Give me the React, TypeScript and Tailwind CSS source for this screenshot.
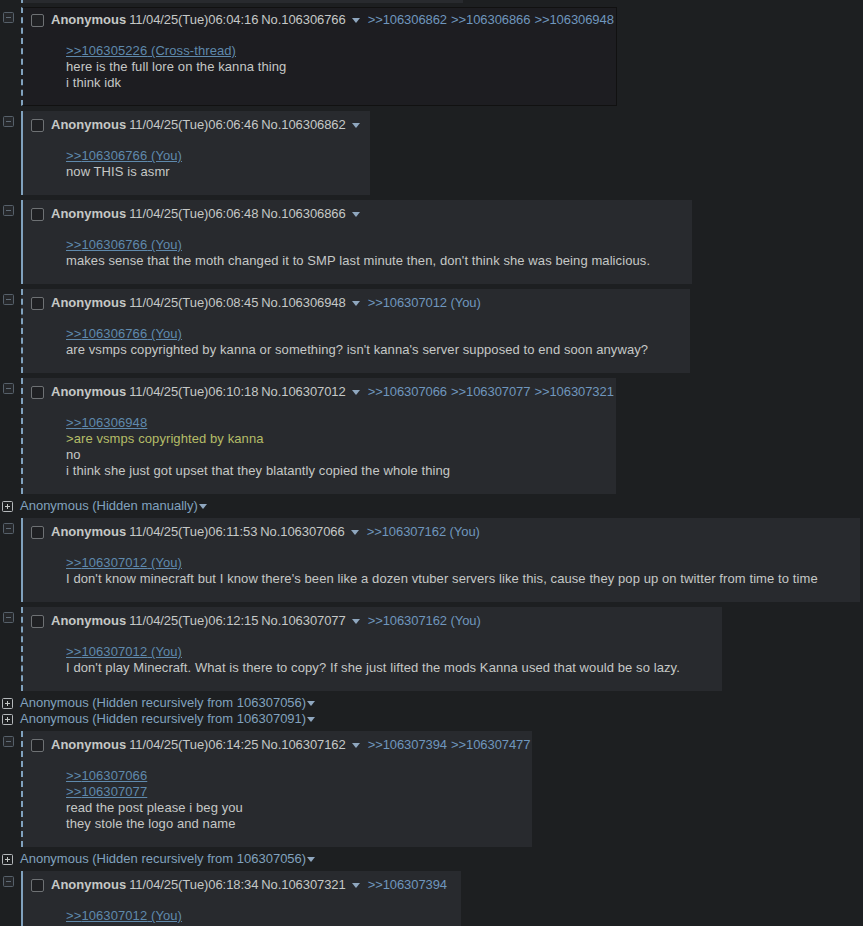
import React from 'react';

type Line =
  | { kind: 'quote'; no: string; note?: string }
  | { kind: 'green'; text: string }
  | { kind: 'text'; text: string };

type Post = {
  type: 'post';
  no: string;
  time: string;
  backlinks: string[];
  body: Line[];
  dashed?: boolean;
  highlight?: boolean;
  minW?: string;
};

type Hidden = { type: 'hidden'; labels: string[] };

const q = (no: string, note?: string): Line => ({ kind: 'quote', no, note });
const t = (text: string): Line => ({ kind: 'text', text });
const g = (text: string): Line => ({ kind: 'green', text });

const items: (Post | Hidden)[] = [
  {
    type: 'post',
    no: '106306766',
    time: '06:04:16',
    backlinks: ['106306862', '106306866', '106306948'],
    body: [q('106305226', '(Cross-thread)'), t('here is the full lore on the kanna thing'), t('i think idk')],
    dashed: true,
    highlight: true,
  },
  {
    type: 'post',
    no: '106306862',
    time: '06:06:46',
    backlinks: [],
    body: [q('106306766', '(You)'), t('now THIS is asmr')],
  },
  {
    type: 'post',
    no: '106306866',
    time: '06:06:48',
    backlinks: [],
    body: [
      q('106306766', '(You)'),
      t("makes sense that the moth changed it to SMP last minute then, don't think she was being malicious."),
    ],
  },
  {
    type: 'post',
    no: '106306948',
    time: '06:08:45',
    backlinks: ['106307012 (You)'],
    body: [
      q('106306766', '(You)'),
      t("are vsmps copyrighted by kanna or something? isn't kanna's server supposed to end soon anyway?"),
    ],
    dashed: true,
  },
  {
    type: 'post',
    no: '106307012',
    time: '06:10:18',
    backlinks: ['106307066', '106307077', '106307321'],
    body: [
      q('106306948'),
      g('>are vsmps copyrighted by kanna'),
      t('no'),
      t('i think she just got upset that they blatantly copied the whole thing'),
    ],
    dashed: true,
  },
  { type: 'hidden', labels: ['Anonymous (Hidden manually)'] },
  {
    type: 'post',
    no: '106307066',
    time: '06:11:53',
    backlinks: ['106307162 (You)'],
    body: [
      q('106307012', '(You)'),
      t(
        "I don't know minecraft but I know there's been like a dozen vtuber servers like this, cause they pop up on twitter from time to time"
      ),
    ],
  },
  {
    type: 'post',
    no: '106307077',
    time: '06:12:15',
    backlinks: ['106307162 (You)'],
    body: [
      q('106307012', '(You)'),
      t("I don't play Minecraft. What is there to copy? If she just lifted the mods Kanna used that would be so lazy."),
    ],
    dashed: true,
  },
  {
    type: 'hidden',
    labels: ['Anonymous (Hidden recursively from 106307056)', 'Anonymous (Hidden recursively from 106307091)'],
  },
  {
    type: 'post',
    no: '106307162',
    time: '06:14:25',
    backlinks: ['106307394', '106307477'],
    body: [q('106307066'), q('106307077'), t('read the post please i beg you'), t('they stole the logo and name')],
    dashed: true,
  },
  { type: 'hidden', labels: ['Anonymous (Hidden recursively from 106307056)'] },
  {
    type: 'post',
    no: '106307321',
    time: '06:18:34',
    backlinks: ['106307394'],
    body: [q('106307012', '(You)'), t('')],
    minW: 'min-w-[440px]',
  },
];

function Triangle({ className }: { className?: string }) {
  return (
    <svg width="8" height="5" viewBox="0 0 8 5" className={className}>
      <path d="M0 0 H8 L4 5 Z" fill="#8fa7bf" />
    </svg>
  );
}

function MinusBox() {
  return (
    <svg width="11" height="11" viewBox="0 0 11 11" className="block">
      <rect x="0.5" y="0.5" width="10" height="10" rx="1" fill="#25272a" stroke="#56606a" />
      <path d="M3 5.5 H8" stroke="#5f6a75" strokeWidth="1" />
    </svg>
  );
}

function PlusBox() {
  return (
    <svg width="11" height="11" viewBox="0 0 11 11" className="block">
      <rect x="0.5" y="0.5" width="10" height="10" rx="1" fill="#1d1f21" stroke="#b4b8bb" />
      <path d="M3 5.5 H8 M5.5 3 V8" stroke="#c5c8c6" strokeWidth="1" />
    </svg>
  );
}

function PostRow({ p, mt }: { p: Post; mt: string }) {
  const border = p.highlight
    ? 'bg-[#1d1d21] border border-[#111] border-l-2 border-l-[#81a2be] [border-left-style:dashed] pt-[2px] pb-[1px]'
    : p.dashed
      ? 'bg-[#282a2e] border-l-2 border-[#81a2be] border-dashed pt-1 pb-[2px]'
      : 'bg-[#282a2e] border-l-2 border-[#81a2be] border-solid pt-1 pb-[2px]';

  return (
    <div className={`flex items-start ${mt}`}>
      <div className="w-[21px] shrink-0 pl-[3px] pt-[5px]">
        <MinusBox />
      </div>
      <div className={`w-fit pl-[3px] pr-[2px] ${border} ${p.minW ?? ''}`}>
        <div className="flex h-5 items-center whitespace-nowrap tracking-[-0.08px]">
          <span className="ml-[5px] mr-[7px] h-[13px] w-[13px] shrink-0 rounded-[2px] border border-[#6e7174] bg-[#1f2023]" />
          <span className="font-bold tracking-normal">Anonymous</span>
          <span className="ml-[3px]">11/04/25(Tue){p.time}</span>
          <span className="ml-[3px]">No.{p.no}</span>
          <Triangle className="ml-[6px] mr-[8px]" />
          {p.backlinks.map((b, i) => (
            <span key={b + i} className={`text-[#6f96bd] ${i > 0 ? 'ml-[4px]' : ''}`}>
              &gt;&gt;{b}
            </span>
          ))}
        </div>
        <div className="mx-[40px] my-[13px] leading-4 tracking-[0.09px]">
          {p.body.map((l, i) => {
            if (l.kind === 'quote')
              return (
                <div key={i} className="whitespace-nowrap text-[#5f89ac]">
                  <span className="underline">&gt;&gt;{l.no}{l.note ? ' ' : ''}</span>
                  {l.note && <span className="underline">{l.note}</span>}
                </div>
              );
            if (l.kind === 'green')
              return (
                <div key={i} className="whitespace-nowrap text-[#b5bd68]">
                  {l.text}
                </div>
              );
            return (
              <div key={i} className="whitespace-nowrap">
                {l.text || '\u00a0'}
              </div>
            );
          })}
        </div>
      </div>
    </div>
  );
}

function HiddenRows({ h, mt }: { h: Hidden; mt: string }) {
  return (
    <div className={mt}>
      {h.labels.map((label) => (
        <div key={label} className="flex h-4 items-center whitespace-nowrap">
          <div className="ml-[2px] mr-[7px]">
            <PlusBox />
          </div>
          <span className="text-[#81a2be]">{label}</span>
          <Triangle className="ml-[1px]" />
        </div>
      ))}
    </div>
  );
}

export default function App() {
  return (
    <div className="h-[926px] w-[863px] overflow-hidden bg-[#1d1f21] font-['Liberation_Sans',Arial,sans-serif] text-[13px] leading-4 text-[#c5c8c6]">
      {/* tail of the post above, cut by the scroll */}
      <div className="ml-[21px] h-[3px] w-[442px] border-l-2 border-dashed border-[#81a2be] bg-[#282a2e]" />
      {items.map((it, i) => {
        const prev = i > 0 ? items[i - 1] : null;
        const mt = i === 0 ? 'mt-[4px]' : it.type === 'hidden' || prev?.type === 'hidden' ? 'mt-[4px]' : 'mt-[5px]';
        return it.type === 'post' ? (
          <PostRow key={it.no} p={it} mt={mt} />
        ) : (
          <HiddenRows key={'h' + i} h={it} mt={mt} />
        );
      })}
    </div>
  );
}
